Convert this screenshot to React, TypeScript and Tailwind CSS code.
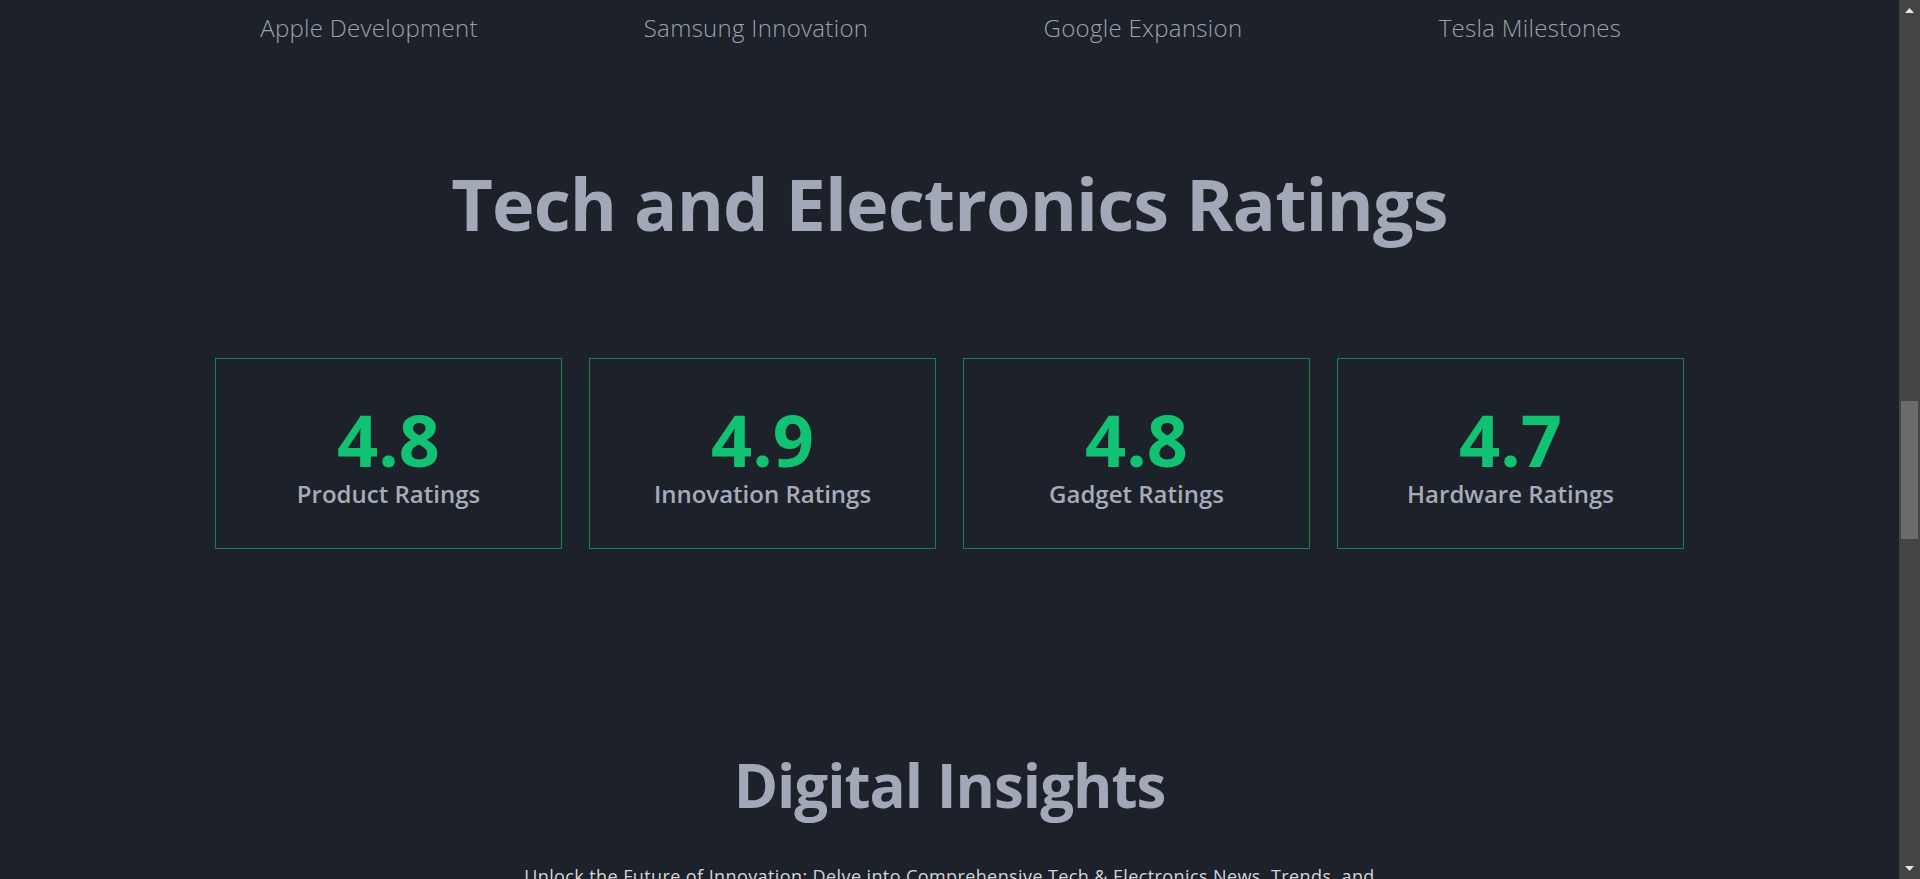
import React from 'react';

const companies = ['Apple Development', 'Samsung Innovation', 'Google Expansion', 'Tesla Milestones'];

const ratings = [
  { score: '4.8', label: 'Product Ratings' },
  { score: '4.9', label: 'Innovation Ratings' },
  { score: '4.8', label: 'Gadget Ratings' },
  { score: '4.7', label: 'Hardware Ratings' },
];

const RatingCard: React.FC<{ score: string; label: string }> = ({ score, label }) => (
  <div className="flex h-[191px] flex-col items-center justify-center border border-[#1b7d47] pt-[6px]">
    <div className="text-7xl leading-none font-bold text-[#12c273]">{score}</div>
    <div className="mt-[3px] text-2xl leading-8 font-semibold text-[#a6abba]">{label}</div>
  </div>
);

const Scrollbar: React.FC = () => (
  <div className="flex w-[21px] flex-col bg-[#444444]">
    <div className="flex h-[21px] items-center justify-center">
      <svg width="9" height="5" viewBox="0 0 9 5">
        <polygon points="0,5 4.5,0 9,5" fill="#e6e6e6" />
      </svg>
    </div>
    <div className="flex-1 px-[2px] pt-[380px]">
      <div className="h-[138px] bg-[#6b6b6b]" />
    </div>
    <div className="flex h-[21px] items-center justify-center">
      <svg width="9" height="5" viewBox="0 0 9 5">
        <polygon points="0,0 9,0 4.5,5" fill="#e6e6e6" />
      </svg>
    </div>
  </div>
);

export default function App() {
  return (
    <div className="flex h-[879px] overflow-hidden bg-[#1d2129] font-['Open_Sans',sans-serif]">
      <main className="flex-1 overflow-hidden">
        {/* Company strip */}
        <div className="mx-auto grid w-[1548px] grid-cols-4 pt-[12px]">
          {companies.map((c) => (
            <div key={c} className="text-center text-2xl leading-8 font-light tracking-[0.3px] text-[#9ba1ae]">
              {c}
            </div>
          ))}
        </div>

        {/* Ratings */}
        <section className="pt-[123px]">
          <h2 className="text-center text-7xl leading-none font-bold tracking-[-0.9px] text-[#a3a8b8]">
            Tech and Electronics Ratings
          </h2>
          <div className="mx-auto mt-[119px] grid w-[1469px] grid-cols-4 gap-[27px]">
            {ratings.map((r, i) => (
              <RatingCard key={i} score={r.score} label={r.label} />
            ))}
          </div>
        </section>

        {/* Insights */}
        <section className="pt-[206px]">
          <h2 className="text-center text-6xl leading-none font-bold tracking-[-1px] text-[#a3a8b8]">
            Digital Insights
          </h2>
          <p className="mx-auto mt-[47px] max-w-[880px] text-center text-lg leading-7 tracking-[0.4px] text-[#d1d5db]">
            Unlock the Future of Innovation: Delve into Comprehensive Tech &amp; Electronics News, Trends, and
            Reviews that keep you ahead of every launch, update and breakthrough in the digital world.
          </p>
        </section>
      </main>
      <Scrollbar />
    </div>
  );
}
